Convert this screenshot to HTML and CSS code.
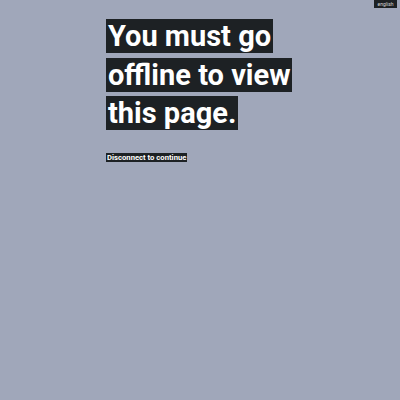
FILE: index.html
```html
<!DOCTYPE html>
<html lang="en">
<head>
<meta charset="utf-8">
<title>Offline</title>
<link rel="stylesheet" href="styles.css">
</head>
<body>
<header class="lang"><div class="lang-btn">english</div></header>
<main class="content">
  <h1 class="title"><span class="hl">You must go offline to view this page.</span></h1>
  <p class="sub"><span class="hl-sm">Disconnect to continue</span></p>
</main>
</body>
</html>
```
FILE: styles.css
```css
html, body {
  margin: 0;
  padding: 0;
  background: #a0a7ba;
  height: 100%;
}
body {
  font-family: Roboto, "Noto Sans", sans-serif;
  color: #fff;
}
.lang {
  display: flex;
  justify-content: flex-end;
  padding-right: 3px;
}
.lang-btn {
  background: #1d2124;
  color: #d8d8d8;
  font-size: 5px;
  line-height: 8px;
  height: 8px;
  width: 23px;
  text-align: center;
}
.content {
  padding: 9px 0 0 106px;
  width: 200px;
}
.title {
  margin: 0;
  font-size: 29px;
  font-weight: 700;
  line-height: 38.5px;
}
.hl {
  background: #1d2124;
  padding: 0 2px;
  box-decoration-break: clone;
  -webkit-box-decoration-break: clone;
}
.sub {
  margin: 20px 0 0 0;
  font-size: 7.7px;
  font-weight: 700;
  line-height: 10px;
}
.hl-sm {
  background: #1d2124;
  padding: 0 1px;
}
```
